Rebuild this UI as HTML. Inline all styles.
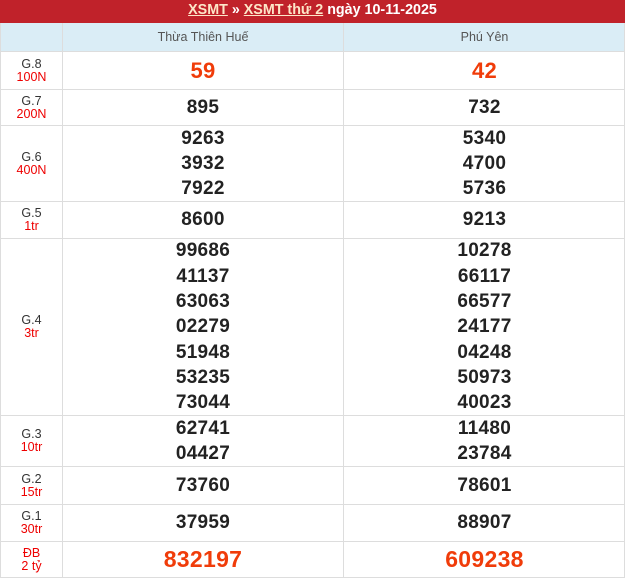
<!DOCTYPE html>
<html><head><meta charset="utf-8"><style>
*{margin:0;padding:0;box-sizing:border-box}
body{width:625px;height:575px;overflow:hidden;background:#fff;font-family:"Liberation Sans",Arial,sans-serif;position:relative}
.hd{position:absolute;left:0;top:0;width:625px;height:23px;background:#c0222a;color:#fff;font-weight:bold;font-size:14.3px;text-align:center;line-height:20px}
.hd u{color:#fde6c8}
.row{position:absolute;left:0;width:625px;border-bottom:1px solid #ddd;border-left:1px solid #ddd;border-right:1px solid #ddd}
.c{position:absolute;top:0;bottom:0;display:flex;flex-direction:column;justify-content:center;align-items:center;text-align:center}
.l{left:0;width:62px;font-size:12.5px;line-height:13px;color:#333;border-right:1px solid #ddd}
.l span{color:#e00}
.a{left:62px;width:281px;border-right:1px solid #ddd}
.b{left:343px;width:281px}
.n{font-weight:bold;font-size:19px;line-height:25.3px;color:#222;letter-spacing:0.3px}
.th{background:#daedf6;top:23px;height:29px}
.th .c{font-size:12.5px;color:#555}
.red{color:#f03c0a;font-size:22px}
.db{color:#f03c0a;font-size:23px}
</style></head><body>
<div class="hd"><u>XSMT</u> » <u>XSMT thứ 2</u> ngày 10-11-2025</div>
<div class="row th"><div class="c l"></div><div class="c a">Thừa Thiên Huế</div><div class="c b">Phú Yên</div></div>
<div class="row" style="top:52px;height:38px"><div class="c l">G.8<span>100N</span></div><div class="c a n red">59</div><div class="c b n red">42</div></div>
<div class="row" style="top:90px;height:36px"><div class="c l">G.7<span>200N</span></div><div class="c a n">895</div><div class="c b n">732</div></div>
<div class="row" style="top:126px;height:76px"><div class="c l">G.6<span>400N</span></div><div class="c a n">9263<br>3932<br>7922</div><div class="c b n">5340<br>4700<br>5736</div></div>
<div class="row" style="top:202px;height:37px"><div class="c l">G.5<span>1tr</span></div><div class="c a n">8600</div><div class="c b n">9213</div></div>
<div class="row" style="top:239px;height:177px"><div class="c l">G.4<span>3tr</span></div><div class="c a n">99686<br>41137<br>63063<br>02279<br>51948<br>53235<br>73044</div><div class="c b n">10278<br>66117<br>66577<br>24177<br>04248<br>50973<br>40023</div></div>
<div class="row" style="top:416px;height:51px"><div class="c l">G.3<span>10tr</span></div><div class="c a n">62741<br>04427</div><div class="c b n">11480<br>23784</div></div>
<div class="row" style="top:467px;height:38px"><div class="c l">G.2<span>15tr</span></div><div class="c a n">73760</div><div class="c b n">78601</div></div>
<div class="row" style="top:505px;height:37px"><div class="c l">G.1<span>30tr</span></div><div class="c a n">37959</div><div class="c b n">88907</div></div>
<div class="row" style="top:542px;height:36px"><div class="c l"><span>ĐB</span><span>2 tỷ</span></div><div class="c a n db">832197</div><div class="c b n db">609238</div></div>
</body></html>
